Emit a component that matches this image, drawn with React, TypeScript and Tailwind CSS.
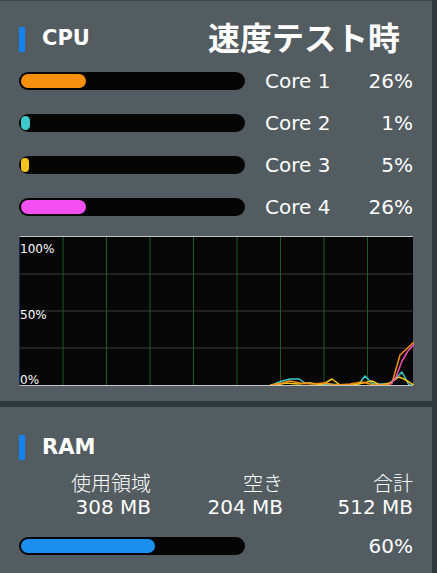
const font = { fontFamily: '"DejaVu Sans", "Noto Sans CJK JP", sans-serif' };

const cores = [
  { name: "Core 1", pct: 26, fill: 65, color: "bg-[#f7900f]" },
  { name: "Core 2", pct: 1, fill: 9, color: "bg-[#3ec9cc]" },
  { name: "Core 3", pct: 5, fill: 8, color: "bg-[#f6c21c]" },
  { name: "Core 4", pct: 26, fill: 65, color: "bg-[#f44ff0]" },
];

function Bar({ fill, color }: { fill: number; color: string }) {
  return (
    <div className="h-[18px] w-[226px] shrink-0 rounded-full bg-[#050505] p-[2px]">
      <div className={`h-full rounded-full ${color}`} style={{ width: fill }} />
    </div>
  );
}

function SectionTitle({ label }: { label: string }) {
  return (
    <div className="flex items-center gap-[17px]">
      <div className="h-[25px] w-[6px] bg-[#1682f0]" />
      <span className="text-[21px] font-bold text-white">{label}</span>
    </div>
  );
}

const W = 394;
const H = 148;

const lines: { color: string; pts: [number, number][] }[] = [
  {
    color: "#3ec9cc",
    pts: [[252, 148], [262, 144], [270, 142], [279, 142], [285, 146], [300, 147], [330, 148], [338, 148], [345, 139], [353, 147], [368, 147], [375, 142], [382, 135], [389, 148], [394, 148]],
  },
  {
    color: "#f6c21c",
    pts: [[256, 148], [266, 146], [278, 147], [290, 146], [302, 148], [312, 142], [320, 148], [333, 148], [343, 146], [352, 144], [360, 148], [370, 146], [379, 140], [384, 142], [394, 148]],
  },
  {
    color: "#f7900f",
    pts: [[250, 148], [262, 146], [270, 144], [280, 146], [292, 147], [304, 146], [316, 148], [330, 147], [342, 145], [354, 148], [366, 148], [372, 146], [380, 118], [394, 105]],
  },
  {
    color: "#ef4fb4",
    pts: [[370, 148], [376, 140], [382, 124], [388, 114], [394, 107]],
  },
];

function Chart() {
  const vx = [43, 86.5, 130, 173.5, 217, 260.5, 304, 347.5];
  const hy = [37, 74, 111];
  return (
    <div className="relative mt-[20px] h-[150px] w-[394px] border-y border-l border-y-[#bfc4c6] border-l-[#1b2a55] bg-[#070707]">
      <svg className="absolute inset-0" width={W} height={H} viewBox={`0 0 ${W} ${H}`}>
        {hy.map((y) => (
          <line key={y} x1={0} x2={W} y1={y} y2={y} stroke="#3c3c3c" strokeWidth={1} />
        ))}
        {vx.map((x) => (
          <line key={x} x1={x} x2={x} y1={0} y2={H} stroke="#1f5a22" strokeWidth={1} />
        ))}
        {lines.map((l) => (
          <polyline
            key={l.color}
            points={l.pts.map((p) => p.join(",")).join(" ")}
            fill="none"
            stroke={l.color}
            strokeWidth={1.5}
            strokeLinejoin="round"
          />
        ))}
      </svg>
      <span className="absolute left-0 top-[6px] text-[12px] leading-none text-white">100%</span>
      <span className="absolute left-0 top-[72px] text-[12px] leading-none text-white">50%</span>
      <span className="absolute left-0 top-[137px] text-[12px] leading-none text-white">0%</span>
    </div>
  );
}

export default function App() {
  return (
    <div className="flex h-[573px] w-[437px] overflow-hidden bg-[#2e383d]" style={font}>
      <div className="flex w-[432px] flex-col">
        {/* CPU */}
        <div className="h-[401px] border-t border-t-[#3a4449] bg-[#525c61] px-[19px] pt-[22px]">
          <div className="flex h-[32px] items-center justify-between">
            <SectionTitle label="CPU" />
            <span className="mr-[13px] text-[32px] font-bold leading-none text-white">速度テスト時</span>
          </div>
          <div className="mt-[17px] flex flex-col gap-[24px]">
            {cores.map((c) => (
              <div key={c.name} className="flex h-[18px] items-center">
                <Bar fill={c.fill} color={c.color} />
                <span className="ml-[20px] text-[20px] text-white">{c.name}</span>
                <span className="ml-auto text-[20px] text-white">{c.pct}%</span>
              </div>
            ))}
          </div>
          <Chart />
        </div>

        {/* RAM */}
        <div className="mt-[6px] flex-1 bg-[#525c61] px-[19px] pt-[25px]">
          <SectionTitle label="RAM" />
          <div className="mt-[9px] grid grid-cols-[132px_132px_130px] text-right text-[20px] leading-[23px] text-white">
            <div>
              <div className="font-light">使用領域</div>
              <div>308 MB</div>
            </div>
            <div>
              <div className="font-light">空き</div>
              <div>204 MB</div>
            </div>
            <div>
              <div className="font-light">合計</div>
              <div>512 MB</div>
            </div>
          </div>
          <div className="mt-[18px] flex h-[18px] items-center">
            <div className="h-[18px] w-[226px] rounded-full bg-[#050505] p-[2px]">
              <div className="h-full w-[134px] rounded-full bg-[#1b8ef0]" />
            </div>
            <span className="ml-auto text-[20px] text-white">60%</span>
          </div>
        </div>
      </div>
    </div>
  );
}
